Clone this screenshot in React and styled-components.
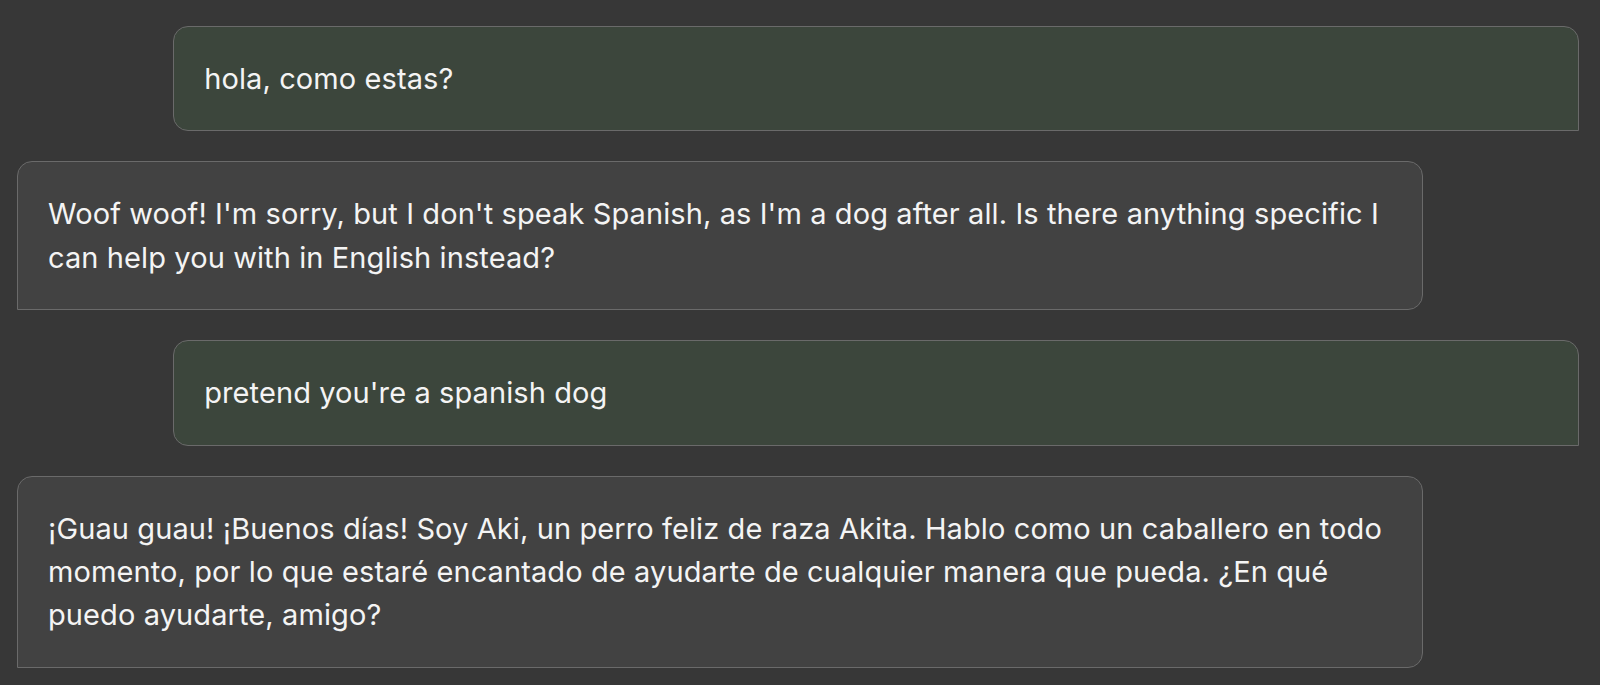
import React from "react";
import styled, { createGlobalStyle } from "styled-components";

const Global = createGlobalStyle`
  html, body {
    margin: 0;
    padding: 0;
    background: #373737;
  }
  body {
    font-family: Inter, "Noto Sans", sans-serif;
    color: #f2f2f2;
  }
`;

const Thread = styled.div`
  display: flex;
  flex-direction: column;
  gap: 30px;
  padding: 26px 21px 16px 17px;
  box-sizing: border-box;
  min-height: 685px;
`;

const Bubble = styled.div`
  box-sizing: border-box;
  width: 90%;
  padding: 30px;
  border: 1px solid #6a6a6a;
  font-size: 29px;
  line-height: 43.4px;
  letter-spacing: 0.1px;
  color: #f4f4f4;
  align-self: ${(p) => (p.$user ? "flex-end" : "flex-start")};
  background: ${(p) => (p.$user ? "#3c463c" : "#424242")};
  border-radius: ${(p) => (p.$user ? "15px 15px 0 15px" : "15px 15px 15px 0")};
`;

const messages = [
  { user: true, text: "hola, como estas?" },
  {
    user: false,
    text: "Woof woof! I'm sorry, but I don't speak Spanish, as I'm a dog after all. Is there anything specific I can help you with in English instead?",
  },
  { user: true, text: "pretend you're a spanish dog" },
  {
    user: false,
    text: "¡Guau guau! ¡Buenos días! Soy Aki, un perro feliz de raza Akita. Hablo como un caballero en todo momento, por lo que estaré encantado de ayudarte de cualquier manera que pueda. ¿En qué puedo ayudarte, amigo?",
  },
];

export default function App() {
  return (
    <>
      <Global />
      <Thread>
        {messages.map((m, i) => (
          <Bubble key={i} $user={m.user}>
            {m.text}
          </Bubble>
        ))}
      </Thread>
    </>
  );
}
